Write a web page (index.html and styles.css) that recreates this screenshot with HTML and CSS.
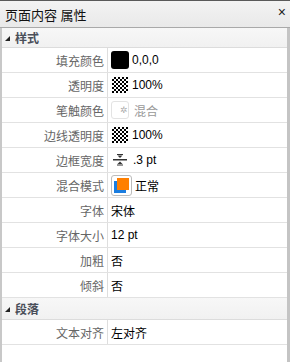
FILE: index.html
```html
<!DOCTYPE html>
<html lang="zh">
<head>
  <meta charset="UTF-8">
  <title>页面内容 属性</title>
  <link rel="stylesheet" href="styles.css">
</head>
<body>
  <div class="panel">
    <div class="titlebar">
      <span class="title">页面内容 属性</span>
      <span class="close">×</span>
    </div>

    <div class="grid">
      <div class="section"><span class="arrow"></span>样式</div>

      <div class="row">
        <div class="label">填充颜色</div>
        <div class="value"><span class="swatch black"></span>0,0,0</div>
      </div>
      <div class="row">
        <div class="label">透明度</div>
        <div class="value"><span class="checker"></span>100%</div>
      </div>
      <div class="row">
        <div class="label">笔触颜色</div>
        <div class="value muted"><span class="swatch empty">✲</span>混合</div>
      </div>
      <div class="row">
        <div class="label">边线透明度</div>
        <div class="value"><span class="checker"></span>100%</div>
      </div>
      <div class="row">
        <div class="label">边框宽度</div>
        <div class="value">
          <svg class="width-icon" width="16" height="12" viewBox="0 0 16 12">
            <rect x="1" y="5" width="14" height="1.5" fill="#333"/>
            <path d="M8 4 L5.5 1.5 H10.5 Z" fill="#333"/>
            <path d="M8 7.5 L5.5 10 H10.5 Z" fill="#333"/>
            <rect x="5" y="0" width="6" height="1" fill="#333"/>
            <rect x="5" y="10.5" width="6" height="1" fill="#333"/>
          </svg>.3 pt
        </div>
      </div>
      <div class="row">
        <div class="label">混合模式</div>
        <div class="value"><span class="blend"><span class="blue"></span><span class="orange"></span></span>正常</div>
      </div>
      <div class="row">
        <div class="label">字体</div>
        <div class="value">宋体</div>
      </div>
      <div class="row">
        <div class="label">字体大小</div>
        <div class="value">12 pt</div>
      </div>
      <div class="row">
        <div class="label">加粗</div>
        <div class="value">否</div>
      </div>
      <div class="row">
        <div class="label">倾斜</div>
        <div class="value">否</div>
      </div>

      <div class="section tall"><span class="arrow"></span>段落</div>

      <div class="row">
        <div class="label">文本对齐</div>
        <div class="value">左对齐</div>
      </div>
    </div>
  </div>
</body>
</html>
```

FILE: styles.css
```css
* {
  padding: 0;
  margin: 0;
  box-sizing: border-box;
}

body {
  width: 290px;
  height: 362px;
  background: #fff;
  font-family: "Liberation Sans", "Noto Sans CJK SC", sans-serif;
  font-size: 12px;
  color: #000;
  overflow: hidden;
}

.panel {
  height: 362px;
  display: flex;
  flex-direction: column;
}

.titlebar {
  height: 28px;
  display: flex;
  align-items: center;
  justify-content: space-between;
  padding: 0 4px 0 5px;
  border-top: 1px solid #5a5a5a;
  border-bottom: 1px solid #a9a9a9;
  background: linear-gradient(#f3f3f3, #e9e9e9);
}

.title {
  font-size: 13px;
  color: #111;
}

.close {
  font-size: 14px;
  line-height: 1;
  color: #222;
  margin-top: -4px;
}

.grid {
  flex: 1;
  border-left: 2px solid #c8c8c8;
  border-right: 3px solid #c4c4c4;
  margin-left: 0;
}

.section {
  height: 20px;
  display: flex;
  align-items: center;
  padding-left: 2px;
  background: linear-gradient(#f7f7f7, #f1f1f1);
  border-bottom: 1px solid #dcdcdc;
  color: #4a4f5a;
  font-size: 12px;
  font-weight: bold;
}

.section.tall {
  height: 22px;
}

.arrow {
  width: 0;
  height: 0;
  margin: 2px 5px 0 1px;
  border-left: 5px solid transparent;
  border-bottom: 5px solid #222;
}

.row {
  height: 25px;
  display: grid;
  grid-template-columns: 106px 1fr;
  border-bottom: 1px solid #e2e2e2;
}

.label {
  display: flex;
  align-items: center;
  justify-content: flex-end;
  padding-right: 3px;
  border-right: 1px solid #dedede;
  color: #666;
}

.value {
  display: flex;
  align-items: center;
  padding-left: 3px;
  gap: 3px;
}

.value.muted {
  color: #999;
}

.swatch {
  width: 18px;
  height: 18px;
  border-radius: 3px;
  display: inline-flex;
  align-items: center;
  justify-content: flex-end;
}

.swatch.black {
  background: #000;
}

.swatch.empty {
  border: 1px solid #e3e3e3;
  color: #aaa;
  font-size: 9px;
  padding-right: 0;
  margin-right: 2px;
}

.checker {
  width: 16px;
  height: 16px;
  margin: 0 1px;
  background-color: #fff;
  background-image:
    linear-gradient(45deg, #000 25%, transparent 25%, transparent 75%, #000 75%),
    linear-gradient(45deg, #000 25%, transparent 25%, transparent 75%, #000 75%);
  background-size: 4px 4px;
  background-position: 0 0, 2px 2px;
}

.width-icon {
  margin: 0 2px 0 1px;
}

.blend {
  width: 21px;
  height: 21px;
  border: 1px solid #bcbcbc;
  border-radius: 3px;
  position: relative;
  background: #fff;
}

.blend .blue {
  position: absolute;
  left: 2px;
  top: 5px;
  width: 12px;
  height: 12px;
  background: #1a7de0;
}

.blend .orange {
  position: absolute;
  left: 5px;
  top: 2px;
  width: 12px;
  height: 12px;
  background: #ff7f00;
}
```
